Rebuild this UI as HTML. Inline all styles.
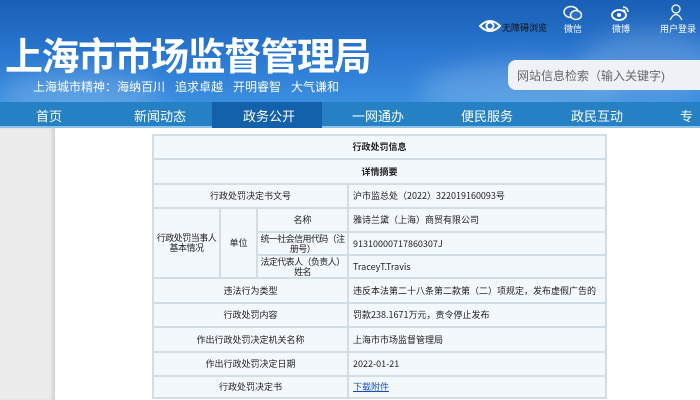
<!DOCTYPE html>
<html><head><meta charset="utf-8"><style>
*{margin:0;padding:0;box-sizing:border-box}
body{width:700px;height:400px;overflow:hidden;background:#fff;font-family:"Liberation Sans","Noto Sans CJK SC",sans-serif;position:relative}
.hdr{position:absolute;left:0;top:0;width:700px;height:102px;background:linear-gradient(180deg,#1a5fb5 0%,#2a78d2 55%,#3a8ee0 100%);overflow:hidden}
.cloud{position:absolute;border-radius:50%;background:rgba(255,255,255,0.18);filter:blur(12px)}
.title{position:absolute;left:5px;top:30px;font-size:38px;font-weight:bold;color:#fff;letter-spacing:-1.5px;font-family:"Noto Sans CJK SC",sans-serif;line-height:48px}
.sub{position:absolute;left:33px;top:78px;font-size:12px;color:#fff;white-space:pre}
.search{position:absolute;left:508px;top:60px;width:200px;height:30px;background:#eef2f7;border-radius:8px;font-size:12px;color:#666;padding:7px 0 0 9px}
.ic{position:absolute;color:#fff;font-size:9px;text-align:center}
.nav{position:absolute;left:0;top:102px;width:700px;height:26px;background:#2581c4;border-bottom:2px solid #8ec2e6}
.nav span{position:absolute;top:4px;font-size:13px;color:#fff}
.act{position:absolute;left:212px;top:0;width:110px;height:26px;background:#1361aa}
.lg{position:absolute;left:0;top:128px;width:55px;height:272px;background:#ececec;box-shadow:inset -4px 0 4px -2px #c8c8c8}
table{position:absolute;left:152px;top:134px;width:455px;border-collapse:collapse;font-size:9px;color:#222;font-family:"Noto Sans CJK SC",sans-serif}
td{border:2px solid #d2dde6;background:#f3f8fd;text-align:center;padding:0 1px;line-height:10px}
td.l{text-align:left;padding-left:4px}
a{color:#1a4fb5;text-decoration:underline}
</style></head><body>
<div class="hdr">
<div class="cloud" style="left:420px;top:60px;width:200px;height:60px"></div>
<div class="cloud" style="left:0;top:70px;width:160px;height:50px"></div>
<div class="cloud" style="left:580px;top:30px;width:140px;height:70px"></div>
<div class="title">上海市市场监督管理局</div>
<div class="sub">上海城市精神：海纳百川   追求卓越   开明睿智   大气谦和</div>
<svg style="position:absolute;left:479px;top:18px" width="22" height="16" viewBox="0 0 22 16"><path d="M1 8 Q11 -2 21 8 Q11 18 1 8Z" fill="none" stroke="#fff" stroke-width="2"/><circle cx="11" cy="8" r="3.5" fill="none" stroke="#fff" stroke-width="2"/></svg>
<div class="ic" style="left:502px;top:21px;color:#111">无障碍浏览</div>
<svg style="position:absolute;left:563px;top:5px" width="20" height="16" viewBox="0 0 20 16"><ellipse cx="8" cy="7" rx="7" ry="5.5" fill="none" stroke="#fff" stroke-width="1.5"/><ellipse cx="13" cy="10" rx="5.5" ry="4.5" fill="#2a70c8" stroke="#fff" stroke-width="1.5"/></svg>
<div class="ic" style="left:564px;top:22px">微信</div>
<svg style="position:absolute;left:611px;top:5px" width="20" height="16" viewBox="0 0 20 16"><ellipse cx="8" cy="10" rx="7" ry="5" fill="none" stroke="#fff" stroke-width="1.8"/><circle cx="8" cy="10" r="2" fill="#fff"/><path d="M12 2a5 5 0 0 1 5 5M12 5a2 2 0 0 1 2 2" fill="none" stroke="#fff" stroke-width="1.5"/></svg>
<div class="ic" style="left:612px;top:22px">微博</div>
<svg style="position:absolute;left:669px;top:4px" width="14" height="17" viewBox="0 0 14 17"><circle cx="7" cy="5" r="4" fill="none" stroke="#fff" stroke-width="1.3"/><path d="M1 16 Q7 5 13 16" fill="none" stroke="#fff" stroke-width="1.3"/></svg>
<div class="ic" style="left:660px;top:22px">用户登录</div>
<div class="search">网站信息检索（输入关键字)</div>
</div>
<div class="nav"><div class="act"></div>
<span style="left:36px">首页</span><span style="left:134px">新闻动态</span><span style="left:243px">政务公开</span><span style="left:352px">一网通办</span><span style="left:461px">便民服务</span><span style="left:571px">政民互动</span><span style="left:680px">专题</span></div>
<div class="lg"></div>
<table>
<colgroup><col style="width:67px"><col style="width:37px"><col style="width:91px"><col></colgroup>
<tr style="height:24px"><td colspan="4"><b>行政处罚信息</b></td></tr>
<tr style="height:25px"><td colspan="4"><b>详情摘要</b></td></tr>
<tr style="height:24px"><td colspan="3">行政处罚决定书文号</td><td class="l">沪市监总处（2022）322019160093号</td></tr>
<tr style="height:24px"><td rowspan="3" style="letter-spacing:-0.5px">行政处罚当事人<br>基本情况</td><td rowspan="3">单位</td><td>名称</td><td class="l">雅诗兰黛（上海）商贸有限公司</td></tr>
<tr style="height:23px"><td style="letter-spacing:-0.6px">统一社会信用代码（注<br>册号）</td><td class="l">91310000717860307J</td></tr>
<tr style="height:23px"><td style="letter-spacing:-0.6px">法定代表人（负责人）<br>姓名</td><td class="l">TraceyT.Travis</td></tr>
<tr style="height:25px"><td colspan="3">违法行为类型</td><td class="l">违反本法第二十八条第二款第（二）项规定，发布虚假广告的</td></tr>
<tr style="height:24px"><td colspan="3">行政处罚内容</td><td class="l">罚款238.1671万元，责令停止发布</td></tr>
<tr style="height:25px"><td colspan="3">作出行政处罚决定机关名称</td><td class="l">上海市市场监督管理局</td></tr>
<tr style="height:24px"><td colspan="3">作出行政处罚决定日期</td><td class="l">2022-01-21</td></tr>
<tr style="height:22px"><td colspan="3">行政处罚决定书</td><td class="l"><a>下载附件</a></td></tr>
</table>
</body></html>
